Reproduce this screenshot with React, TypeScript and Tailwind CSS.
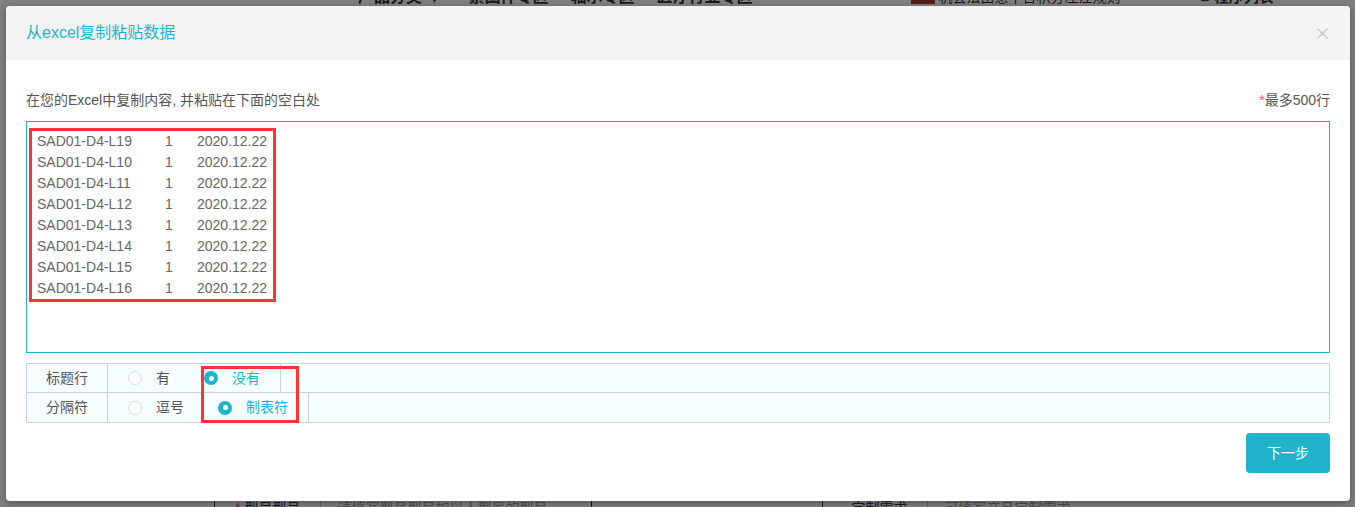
import React from 'react';

const rows = [
  'SAD01-D4-L19',
  'SAD01-D4-L10',
  'SAD01-D4-L11',
  'SAD01-D4-L12',
  'SAD01-D4-L13',
  'SAD01-D4-L14',
  'SAD01-D4-L15',
  'SAD01-D4-L16',
];

function Radio({ checked, label }: { checked?: boolean; label: string }) {
  return (
    <div className="flex items-center gap-[14px]">
      {checked ? (
        <span className="flex h-[14px] w-[14px] items-center justify-center rounded-full bg-[#1fb4cb]">
          <span className="h-[5px] w-[5px] rounded-full bg-white" />
        </span>
      ) : (
        <span className="h-[14px] w-[14px] rounded-full border border-[#dcdcdc] bg-white" />
      )}
      <span className={checked ? 'text-[#1fb4cb]' : 'text-[#555]'}>{label}</span>
    </div>
  );
}

function OptionRow({ title, options, last }: { title: string; options: { label: string; checked?: boolean }[]; last?: boolean }) {
  return (
    <div className={`flex h-[29px] ${last ? '' : 'border-b border-[#cfcfcf]'}`}>
      <div className="flex w-[81px] items-center justify-center border-r border-[#cfcfcf] text-[#555]">{title}</div>
      <div className="flex items-center gap-[34px] border-r border-[#cfcfcf] pl-[20px] pr-[20px]">
        {options.map((o) => (
          <Radio key={o.label} label={o.label} checked={o.checked} />
        ))}
      </div>
    </div>
  );
}

// page that sits behind the dimmed overlay, only its edges show
function BackgroundPage() {
  return (
    <div className="flex h-full flex-col">
      <div className="-mt-[13px] flex h-[20px] items-center text-[16px] font-bold text-[#333]">
        <span className="ml-[358px]">产品分类 ∨</span>
        <span className="ml-[26px]">紧固件专区</span>
        <span className="ml-[22px]">轴承专区</span>
        <span className="ml-[22px]">医疗行业专区</span>
        <span className="ml-[158px] flex items-center text-[14px] font-normal">
          <span className="mr-[4px] h-[14px] w-[24px] bg-[#a33a34]" />
          机会法由意平台积分左注规则
        </span>
        <span className="ml-[80px] text-[15px]">■ 程序列表</span>
      </div>
      <div className="flex-1" />
      <div className="mb-[-12px] flex h-[22px] items-center text-[14px]">
        <span className="ml-[214px] h-full border-l border-[#333]" />
        <span className="ml-[20px] text-[#e33]">*</span>
        <span className="ml-[4px] text-[#333]">型号型号</span>
        <span className="ml-[20px] h-full border-l border-[#bbb]" />
        <span className="ml-[16px] text-[#999]">请填写型号型号加以人型号的型号</span>
        <span className="ml-[44px] h-full border-l border-[#333]" />
        <span className="ml-[230px] h-full border-l border-[#333]" />
        <span className="ml-[28px] text-[#333]">定制需求</span>
        <span className="ml-[20px] h-full border-l border-[#bbb]" />
        <span className="ml-[16px] text-[#999]">可填写产品定制需求</span>
      </div>
    </div>
  );
}

export default function App() {
  return (
    <div className="relative h-[507px] w-[1355px] overflow-hidden bg-white font-['Liberation_Sans','Noto_Sans_CJK_SC',sans-serif] text-[14px]">
      <BackgroundPage />
      <div className="absolute inset-0 bg-black/50" />

      <div className="absolute left-[6px] top-[6px] flex h-[495px] w-[1344px] flex-col overflow-hidden rounded-[4px] bg-white shadow-[0_2px_6px_rgba(0,0,0,0.35)]">
        <div className="flex h-[54px] shrink-0 items-center justify-between bg-[#f4f4f4] pl-[20px] pr-[22px]">
          <h2 className="text-[16px] text-[#1fb4cb]">从excel复制粘贴数据</h2>
          <svg width="11" height="11" viewBox="0 0 11 11" className="mt-[1px]">
            <path d="M0.5 0.5 L10.5 10.5 M10.5 0.5 L0.5 10.5" stroke="#c4c4c4" strokeWidth="1.2" />
          </svg>
        </div>

        <div className="relative flex flex-col px-[20px]">
          <div className="mt-[30px] flex h-[20px] items-center justify-between text-[#555]">
            <span>在您的Excel中复制内容, 并粘贴在下面的空白处</span>
            <span>
              <span className="text-[#f55]">*</span>最多500行
            </span>
          </div>

          <div className="mt-[11px] h-[232px] border border-[#1fb4cb] bg-white">
            <div className="ml-[2px] mt-[6px] inline-flex flex-col border-[3px] border-[#f33] pl-[5px] pr-[6px] leading-[21px] text-[#666]">
              {rows.map((code) => (
                <div key={code} className="flex">
                  <span className="w-[128px]">{code}</span>
                  <span className="w-[32px]">1</span>
                  <span>2020.12.22</span>
                </div>
              ))}
            </div>
          </div>

          <div className="relative mt-[10px] border border-[#cfcfcf] bg-[#f5fdff]">
            <OptionRow
              title="标题行"
              options={[{ label: '有' }, { label: '没有', checked: true }]}
            />
            <OptionRow
              title="分隔符"
              last
              options={[{ label: '逗号' }, { label: '制表符', checked: true }]}
            />
            {/* annotation box */}
            <div className="absolute left-[174px] top-[2px] h-[57px] w-[98px] border-[3px] border-[#f33]" />
          </div>

          <div className="mt-[10px] flex justify-end">
            <button className="h-[40px] w-[84px] rounded-[4px] bg-[#1fb4cb] text-[14px] text-white">下一步</button>
          </div>
        </div>
      </div>
    </div>
  );
}
